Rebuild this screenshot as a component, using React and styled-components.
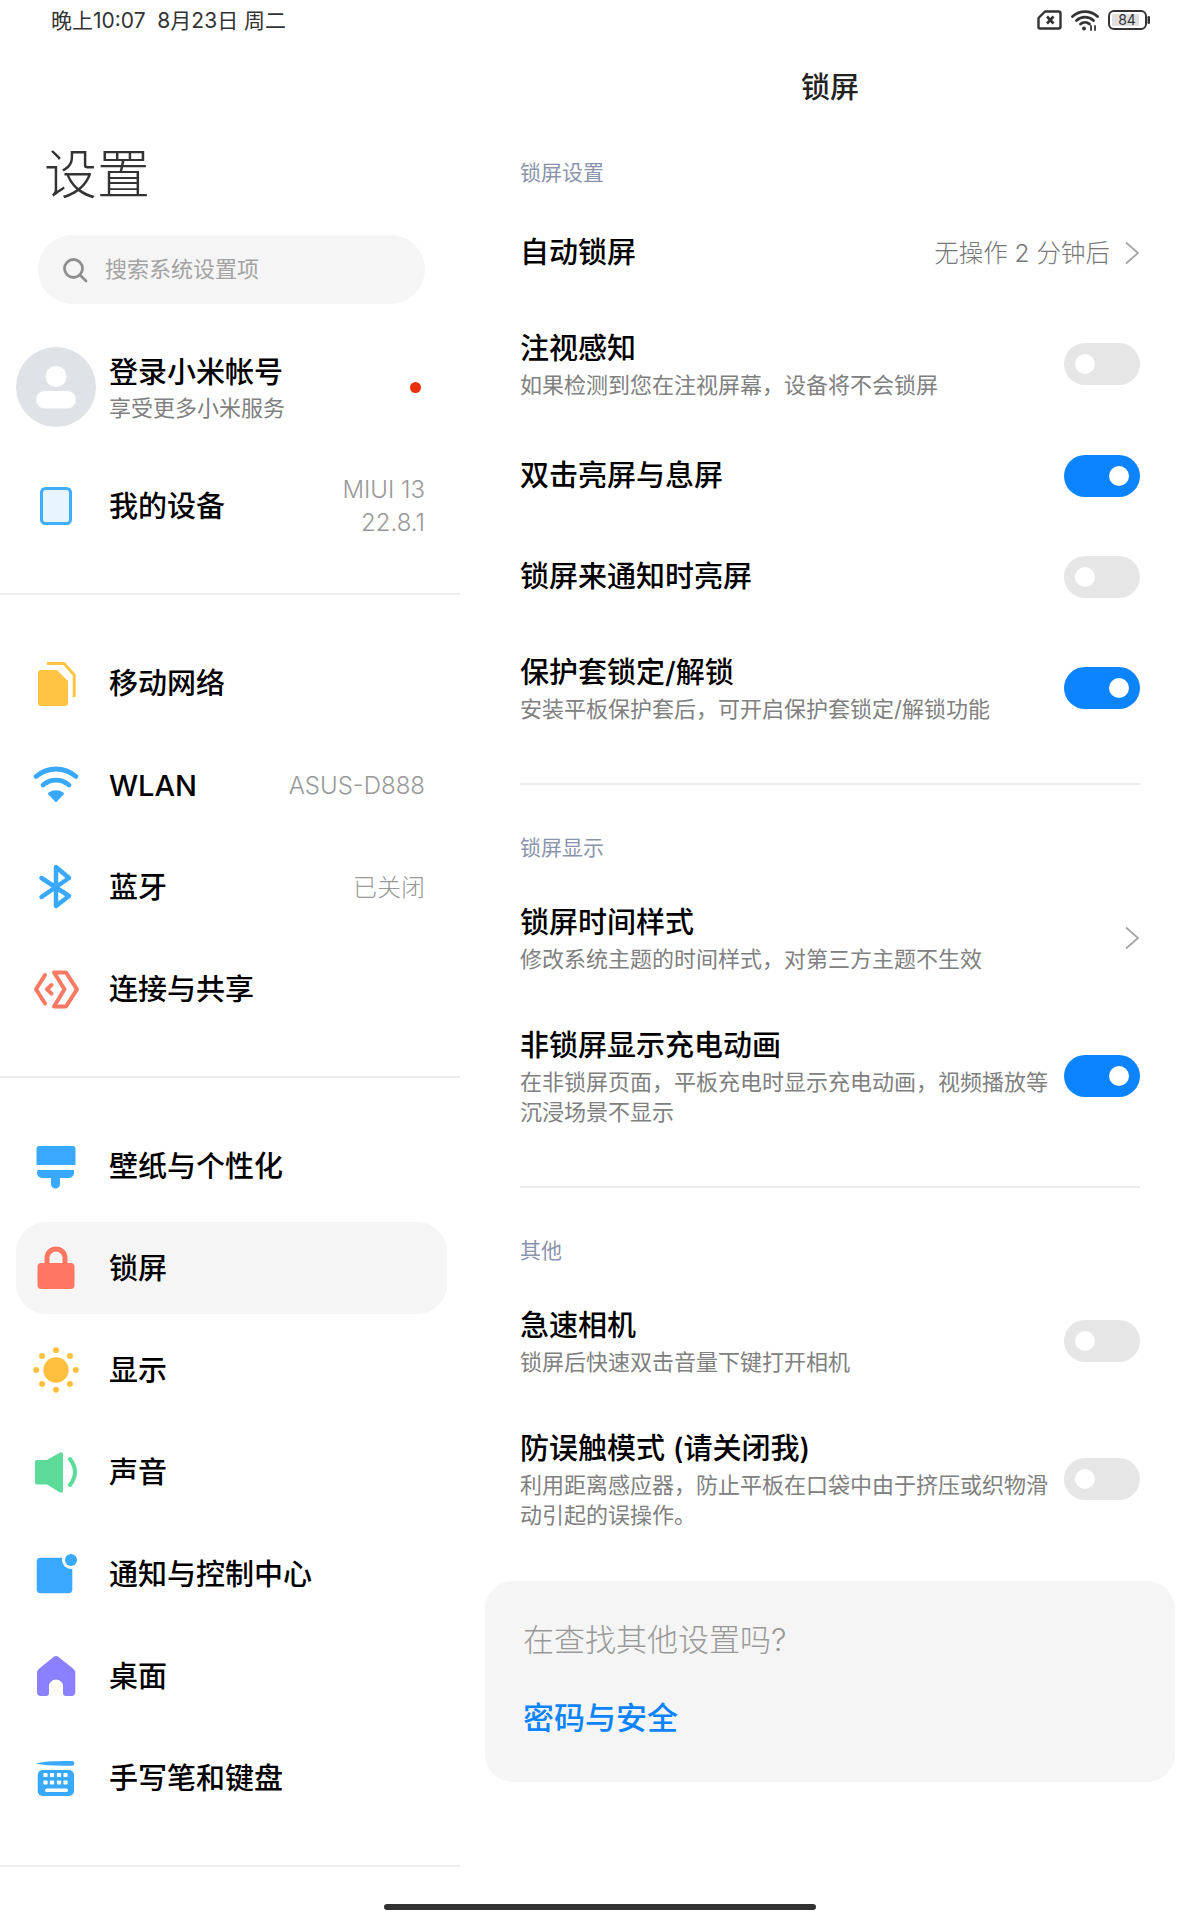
import React from 'react';
import styled, { createGlobalStyle } from 'styled-components';

const GlobalStyle = createGlobalStyle`
  html, body {
    margin: 0;
    padding: 0;
    background: #fff;
  }
  body {
    font-family: Inter, "Noto Sans CJK SC", sans-serif;
    color: #000;
  }
  * {
    box-sizing: border-box;
  }
`;

const Page = styled.div`
  width: 1200px;
  height: 1920px;
  display: flex;
  flex-direction: column;
  overflow: hidden;
  background: #fff;
`;

const StatusBar = styled.div`
  height: 40px;
  flex: none;
  display: flex;
  align-items: center;
  justify-content: space-between;
  padding: 0 50px 0 51px;
  color: #333;
  font-size: 21px;
`;

const StatusText = styled.span`
  white-space: pre;
  padding-bottom: 2px;
`;

const StatusIcons = styled.div`
  display: flex;
  align-items: center;
  gap: 9px;
`;

const Panes = styled.div`
  flex: 1;
  display: flex;
  min-height: 0;
`;

const LeftPane = styled.div`
  width: 460px;
  flex: none;
`;

const BigTitle = styled.h1`
  margin: 100px 0 0 44px;
  font-size: 53px;
  font-weight: 300;
  line-height: 70px;
  color: #333;
`;

const SearchBox = styled.div`
  margin: 25px 35px 0 38px;
  height: 69px;
  border-radius: 35px;
  background: #f5f5f5;
  display: flex;
  align-items: center;
  padding-left: 24px;
  gap: 17px;
  color: #a3a3a3;
  font-size: 22px;
`;

const SearchText = styled.span`
  padding-bottom: 6px;
`;

const AccountRow = styled.div`
  margin: 33px 0 0 16px;
  height: 100px;
  display: flex;
  align-items: center;
  padding-right: 39px;
`;

const AccountText = styled.div`
  flex: 1;
  margin-left: 13px;
  padding-top: 1px;
  display: flex;
  flex-direction: column;
`;

const AccountName = styled.div`
  font-size: 29px;
  font-weight: 500;
  line-height: 40px;
`;

const AccountSub = styled.div`
  font-size: 22px;
  line-height: 30px;
  color: #808080;
`;

const RedDot = styled.span`
  width: 11px;
  height: 11px;
  border-radius: 50%;
  background: #e8300c;
`;

const MenuGroup = styled.div`
  margin-top: ${(p) => p.$top || 0}px;
  display: flex;
  flex-direction: column;
  gap: 10px;
`;

const MenuRow = styled.div`
  margin: 0 13px 0 16px;
  height: 92px;
  padding-right: 22px;
  display: flex;
  align-items: center;
  border-radius: 30px;
  background: ${(p) => (p.$active ? '#f5f5f5' : 'transparent')};
`;

const IconSlot = styled.div`
  width: 80px;
  flex: none;
  display: flex;
  justify-content: center;
`;

const MenuLabel = styled.div`
  flex: 1;
  margin-left: 13px;
  padding-top: 1px;
  font-size: 29px;
  font-weight: 500;
  line-height: 40px;
`;

const MenuValue = styled.div`
  font-size: 24px;
  font-weight: 300;
  line-height: 33px;
  color: #999;
  text-align: right;
`;

const LeftDivider = styled.div`
  height: 2px;
  background: #ececec;
  margin: 41px 0 ${(p) => p.$bottom}px;
`;

const RightPane = styled.div`
  flex: 1;
  padding: 0 25px;
`;

const PaneTitle = styled.div`
  height: 92px;
  display: flex;
  align-items: center;
  justify-content: center;
  margin: 0 0 12px;
  padding-bottom: 2px;
  font-size: 29px;
  font-weight: 500;
  color: #222;
`;

const Section = styled.div`
  padding: 0 35px;
`;

const SectionLabel = styled.div`
  height: 58px;
  padding-bottom: 4px;
  display: flex;
  align-items: center;
  font-size: 21px;
  color: #8b94ad;
`;

const SettingRow = styled.div`
  height: ${(p) => p.$height}px;
  display: flex;
  align-items: center;
`;

const SettingText = styled.div`
  flex: 1;
  padding-right: 16px;
`;

const SettingTitle = styled.div`
  font-size: 29px;
  font-weight: 500;
  line-height: 42px;
`;

const SettingSub = styled.div`
  font-size: 22px;
  line-height: 30px;
  color: #808080;
`;

const SettingValue = styled.div`
  font-size: 24.5px;
  color: #777;
  font-weight: 300;
  margin-right: 14px;
  padding-bottom: 2px;
`;

const Toggle = styled.div`
  width: 76px;
  height: 42px;
  flex: none;
  border-radius: 21px;
  display: flex;
  align-items: center;
  padding: 0 11px;
  justify-content: ${(p) => (p.$on ? 'flex-end' : 'flex-start')};
  background: ${(p) => (p.$on ? '#0d84ff' : '#e6e6e6')};
`;

const ToggleKnob = styled.span`
  width: 20px;
  height: 20px;
  border-radius: 50%;
  background: #fff;
`;

const RightDivider = styled.div`
  height: 2px;
  background: #ececec;
  margin: 34px 0;
`;

const HintCard = styled.div`
  margin-top: 25px;
  height: 201px;
  border-radius: 28px;
  background: #f5f5f5;
  padding: 34px 38px;
`;

const HintTitle = styled.div`
  font-size: 31px;
  line-height: 50px;
  font-weight: 300;
  color: #999;
`;

const HintLink = styled.div`
  margin-top: 28px;
  font-size: 31px;
  line-height: 50px;
  font-weight: 500;
  color: #0d84ff;
`;

const HomeBarWrap = styled.div`
  height: 16px;
  flex: none;
  display: flex;
  justify-content: center;
`;

const HomeBar = styled.div`
  width: 432px;
  height: 6px;
  border-radius: 3px;
  background: #333;
`;

const Chevron = () => (
  <svg width="16" height="24" viewBox="0 0 16 24" fill="none" stroke="#a6a6a6" strokeWidth="1.8">
    <path d="M2 1.5l12 10.5L2 22.5" />
  </svg>
);

const SimIcon = () => (
  <svg width="25" height="20" viewBox="0 0 25 20" fill="none" stroke="#333" strokeWidth="2.4">
    <path d="M8 1.5h13.5a2 2 0 0 1 2 2v13a2 2 0 0 1-2 2H3a1.5 1.5 0 0 1-1.5-1.5V8z" strokeLinejoin="round" />
    <path d="M10 6.5l6.5 7M16.5 6.5l-6.5 7" strokeWidth="2.6" />
  </svg>
);

const StatusWifi = () => (
  <svg width="28" height="22" viewBox="0 0 28 22" fill="none" stroke="#333" strokeWidth="2.8" strokeLinecap="round">
    <path d="M1.5 7.5c7-6.5 18-6.5 25 0" />
    <path d="M5.5 11.5c4.8-4.4 12.2-4.4 17 0" />
    <path d="M9.5 15c2.6-2.2 6.4-2.2 9 0" />
    <circle cx="13" cy="19.5" r="2" fill="#333" stroke="none" />
    <path d="M20 17v4M24 17v4" strokeWidth="1.8" />
  </svg>
);

const BatteryIcon = () => (
  <svg width="42" height="20" viewBox="0 0 42 20">
    <rect x="1" y="1" width="37" height="18" rx="5" fill="none" stroke="#333" strokeWidth="2" />
    <rect x="4" y="4" width="27" height="12" rx="1.5" fill="#e0e0e0" />
    <rect x="39.5" y="6" width="2.5" height="8" rx="1.2" fill="#333" />
    <text x="19" y="15.2" textAnchor="middle" fontSize="14" fill="#333" fontFamily="Inter, sans-serif">84</text>
  </svg>
);

const SearchIcon = () => (
  <svg width="26" height="26" viewBox="0 0 26 26" fill="none" stroke="#8f8f8f" strokeWidth="2.8" strokeLinecap="round">
    <circle cx="11.5" cy="11.5" r="9" />
    <path d="M18 18l6 6" />
  </svg>
);

const AvatarIcon = () => (
  <svg width="80" height="80" viewBox="0 0 80 80">
    <circle cx="40" cy="40" r="40" fill="#dfe2e7" />
    <circle cx="40" cy="29.5" r="10.5" fill="#fff" />
    <rect x="20" y="44" width="40" height="17.5" rx="8.75" fill="#fff" />
  </svg>
);

const Glyph = ({ children }) => (
  <svg width="48" height="48" viewBox="0 0 48 48" fill="none">
    {children}
  </svg>
);

const DeviceIcon = () => (
  <Glyph>
    <rect x="9.5" y="6.5" width="29" height="35" rx="4" fill="#e8f5ff" stroke="#40adff" strokeWidth="3" />
  </Glyph>
);

const SimCardIcon = () => (
  <Glyph>
    <path d="M15 4.5H32L42.2 16V38" stroke="#ffc444" strokeWidth="3" strokeLinejoin="round" />
    <path d="M9 11h16l11 11v22a3 3 0 0 1-3 3H9a3 3 0 0 1-3-3V14a3 3 0 0 1 3-3z" fill="#ffc444" />
  </Glyph>
);

const WifiIcon = () => (
  <Glyph>
    <g stroke="#39a9ff" strokeWidth="4.8" strokeLinecap="round">
      <path d="M4 15.5C16 5.5 32 5.5 44 15.5" />
      <path d="M11 24C19 17.5 29 17.5 37 24" />
    </g>
    <path d="M17 32.5C21 29.5 27 29.5 31 32.5L24 40Z" fill="#39a9ff" stroke="#39a9ff" strokeWidth="2" strokeLinejoin="round" />
  </Glyph>
);

const BluetoothIcon = () => (
  <Glyph>
    <path d="M9.5 15L37 33L24 43V4L37 15L9.5 34" stroke="#39a9ff" strokeWidth="4.5" strokeLinecap="round" strokeLinejoin="round" />
  </Glyph>
);

const ShareIcon = () => (
  <Glyph>
    <g stroke="#f97a63" strokeWidth="4" strokeLinecap="round" strokeLinejoin="round">
      <path d="M22 7.5H34L45 24.3L34 41.5H22L32.5 24.3Z" />
      <path d="M13 10L4 24.3L13 38.5" />
      <path d="M19.5 20L15 24.3L19.5 28.6" />
    </g>
  </Glyph>
);

const BrushIcon = () => (
  <Glyph>
    <path d="M7.5 4h33a3 3 0 0 1 3 3v16h-39V7a3 3 0 0 1 3-3z" fill="#39a9ff" />
    <path d="M5.5 28h36.5v3a5 5 0 0 1-5 5h-9v6a4.5 4.5 0 0 1-9 0v-6h-9a5 5 0 0 1-5-5z" fill="#39a9ff" />
  </Glyph>
);

const LockIcon = () => (
  <Glyph>
    <path d="M15 21v-7a9 9 0 0 1 18 0v7" stroke="#ff7762" strokeWidth="5" />
    <rect x="5.5" y="19" width="37" height="26" rx="4" fill="#ff7762" />
  </Glyph>
);

const SUN_DOTS = [0, 45, 90, 135, 180, 225, 270, 315];

const SunIcon = () => (
  <Glyph>
    <circle cx="24" cy="24" r="12.7" fill="#ffc03f" />
    {SUN_DOTS.map((deg) => (
      <circle
        key={deg}
        cx={24 + 19.7 * Math.cos((deg * Math.PI) / 180)}
        cy={24 + 19.7 * Math.sin((deg * Math.PI) / 180)}
        r="3"
        fill="#ffc03f"
      />
    ))}
  </Glyph>
);

const SoundIcon = () => (
  <Glyph>
    <path d="M5 12h10L28 4.5a2 2 0 0 1 3 1.7v36.6a2 2 0 0 1-3 1.7L15 36.5H5a2 2 0 0 1-2-2V14a2 2 0 0 1 2-2z" fill="#5ddb9b" />
    <path d="M38 11Q48 24 38 37" stroke="#5ddb9b" strokeWidth="4" strokeLinecap="round" />
  </Glyph>
);

const NotifyIcon = () => (
  <Glyph>
    <rect x="4.7" y="7.7" width="35.6" height="35.6" rx="4" fill="#39a9ff" />
    <circle cx="39" cy="10" r="9" fill="#fff" />
    <circle cx="39" cy="10" r="6" fill="#39a9ff" />
  </Glyph>
);

const HomeIcon = () => (
  <Glyph>
    <path
      d="M21.5 5a4 4 0 0 1 5 0L41 16.5a6 6 0 0 1 2.3 4.7V40a4 4 0 0 1-4 4H34a3 3 0 0 1-3-3v-7a7 6.5 0 0 0-14 0v7a3 3 0 0 1-3 3H9a4 4 0 0 1-4-4V21.2a6 6 0 0 1 2.3-4.7Z"
      fill="#8b80ff"
    />
  </Glyph>
);

const KEY_ROWS = [21, 28.5];
const KEY_COLS = [13.5, 20, 27, 33.5];

const KeyboardIcon = () => (
  <Glyph>
    <path d="M4 9.5C12 7 30 7 40 7a2.3 2.3 0 0 1 0 4.7C30 11.7 12 11.7 4 9.5Z" fill="#39a9ff" />
    <rect x="5.7" y="16" width="36.3" height="26" rx="5" fill="#39a9ff" />
    {KEY_ROWS.map((y) =>
      KEY_COLS.map((x) => <rect key={`${x}-${y}`} x={x - 2.1} y={y - 2.1} width="4.2" height="4.2" rx="0.8" fill="#fff" />)
    )}
    <rect x="13" y="34.5" width="23" height="3.4" rx="1.7" fill="#fff" />
  </Glyph>
);

const MENU_TOP = [
  { label: '移动网络', Icon: SimCardIcon },
  { label: 'WLAN', Icon: WifiIcon, value: 'ASUS-D888' },
  { label: '蓝牙', Icon: BluetoothIcon, value: '已关闭' },
  { label: '连接与共享', Icon: ShareIcon },
];

const MENU_BOTTOM = [
  { label: '壁纸与个性化', Icon: BrushIcon },
  { label: '锁屏', Icon: LockIcon, active: true },
  { label: '显示', Icon: SunIcon },
  { label: '声音', Icon: SoundIcon },
  { label: '通知与控制中心', Icon: NotifyIcon },
  { label: '桌面', Icon: HomeIcon },
  { label: '手写笔和键盘', Icon: KeyboardIcon },
];

const Menu = ({ items }) => (
  <MenuGroup>
    {items.map(({ label, Icon, value, active }) => (
      <MenuRow key={label} $active={active}>
        <IconSlot>
          <Icon />
        </IconSlot>
        <MenuLabel>{label}</MenuLabel>
        {value && <MenuValue>{value}</MenuValue>}
      </MenuRow>
    ))}
  </MenuGroup>
);

const Setting = ({ height, title, sub, on, value, chevron }) => (
  <SettingRow $height={height}>
    <SettingText>
      <SettingTitle>{title}</SettingTitle>
      {sub && <SettingSub>{sub}</SettingSub>}
    </SettingText>
    {value && <SettingValue>{value}</SettingValue>}
    {chevron && <Chevron />}
    {on !== undefined && (
      <Toggle $on={on}>
        <ToggleKnob />
      </Toggle>
    )}
  </SettingRow>
);

const App = () => (
  <Page>
    <GlobalStyle />
    <StatusBar>
      <StatusText>晚上10:07  8月23日 周二</StatusText>
      <StatusIcons>
        <SimIcon />
        <StatusWifi />
        <BatteryIcon />
      </StatusIcons>
    </StatusBar>
    <Panes>
      <LeftPane>
        <BigTitle>设置</BigTitle>
        <SearchBox>
          <SearchIcon />
          <SearchText>搜索系统设置项</SearchText>
        </SearchBox>
        <AccountRow>
          <AvatarIcon />
          <AccountText>
            <AccountName>登录小米帐号</AccountName>
            <AccountSub>享受更多小米服务</AccountSub>
          </AccountText>
          <RedDot />
        </AccountRow>
        <MenuGroup $top={23}>
          <MenuRow>
            <IconSlot>
              <DeviceIcon />
            </IconSlot>
            <MenuLabel>我的设备</MenuLabel>
            <MenuValue>
              MIUI 13
              <br />
              22.8.1
            </MenuValue>
          </MenuRow>
        </MenuGroup>
        <LeftDivider $bottom={42} />
        <Menu items={MENU_TOP} />
        <LeftDivider $bottom={42} />
        <Menu items={MENU_BOTTOM} />
        <LeftDivider $bottom={0} />
      </LeftPane>
      <RightPane>
        <PaneTitle>锁屏</PaneTitle>
        <Section>
          <SectionLabel>锁屏设置</SectionLabel>
          <Setting height={101} title="自动锁屏" value="无操作 2 分钟后" chevron />
          <Setting height={122} title="注视感知" sub="如果检测到您在注视屏幕，设备将不会锁屏" on={false} />
          <Setting height={101} title="双击亮屏与息屏" on />
          <Setting height={101} title="锁屏来通知时亮屏" on={false} />
          <Setting height={122} title="保护套锁定/解锁" sub="安装平板保护套后，可开启保护套锁定/解锁功能" on />
          <RightDivider />
          <SectionLabel>锁屏显示</SectionLabel>
          <Setting height={122} title="锁屏时间样式" sub="修改系统主题的时间样式，对第三方主题不生效" chevron />
          <Setting height={153} title="非锁屏显示充电动画" sub="在非锁屏页面，平板充电时显示充电动画，视频播放等沉浸场景不显示" on />
          <RightDivider />
          <SectionLabel>其他</SectionLabel>
          <Setting height={122} title="急速相机" sub="锁屏后快速双击音量下键打开相机" on={false} />
          <Setting height={154} title="防误触模式 (请关闭我)" sub="利用距离感应器，防止平板在口袋中由于挤压或织物滑动引起的误操作。" on={false} />
        </Section>
        <HintCard>
          <HintTitle>在查找其他设置吗?</HintTitle>
          <HintLink>密码与安全</HintLink>
        </HintCard>
      </RightPane>
    </Panes>
    <HomeBarWrap>
      <HomeBar />
    </HomeBarWrap>
  </Page>
);

export default App;
